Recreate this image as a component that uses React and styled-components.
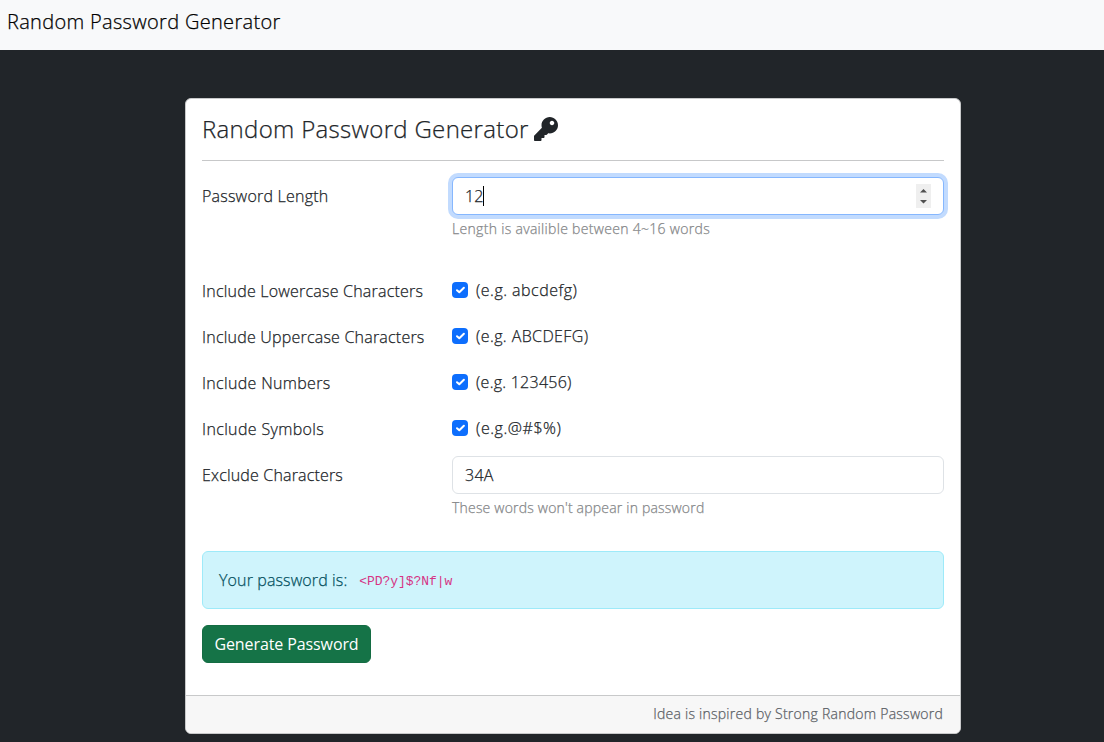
import React from "react";
import styled, { createGlobalStyle } from "styled-components";
import { FaKey } from "react-icons/fa";

const GlobalStyle = createGlobalStyle`
  *, *::before, *::after { box-sizing: border-box; }
  body {
    margin: 0;
    min-height: 742px;
    overflow: hidden;
    background: #212529;
    color: #212529;
    font-family: "Open Sans", "Noto Sans", sans-serif;
    font-size: 16px;
    font-weight: 300;
    line-height: 24px;
  }
`;

const Text = styled.span`
  white-space: nowrap;
  letter-spacing: ${({ $track = 0 }) => $track}px;
  -webkit-text-stroke: ${({ $stroke = 0.25 }) => $stroke}px currentColor;
`;

const Navbar = styled.nav`
  height: 50px;
  padding: 7px 7px 0;
  background: #f8f9fa;
  color: #000;
  font-size: 20px;
  line-height: 30px;
`;

const Card = styled.main`
  width: 776px;
  height: 636px;
  margin: 48px 0 0 185px;
  display: flex;
  flex-direction: column;
  background: #fff;
  border: 1px solid #c8c9ca;
  border-radius: 6px;
  overflow: hidden;
`;

const CardBody = styled.div`
  flex: 1;
  padding: 15px 16px 16px;
`;

const Title = styled.h1`
  display: flex;
  align-items: center;
  gap: 5px;
  height: 29px;
  margin: 0;
  font-size: 24px;
  font-weight: 300;
  line-height: 29px;
`;

const Divider = styled.hr`
  margin: 17px 0 16px;
  border: 0;
  border-top: 1px solid #c7c8c9;
`;

const Row = styled.div`
  display: grid;
  grid-template-columns: 250px 1fr;
  height: ${({ $height = 46 }) => $height}px;
`;

const Label = styled.label`
  padding-top: 7px;
`;

const Field = styled.div`
  display: flex;
  align-items: center;
  height: 38px;
  padding: 0 12px;
  background: #fff;
  border: 1px solid ${({ $focused }) => ($focused ? "#86b7fe" : "#dee2e6")};
  border-radius: 6px;
  box-shadow: ${({ $focused }) => ($focused ? "0 0 0 4px #c2dbfe" : "none")};
`;

const Caret = styled.span`
  width: 1px;
  height: 20px;
  background: #000;
`;

const Spinner = styled.span`
  display: flex;
  align-items: center;
  justify-content: center;
  width: 15px;
  height: 24px;
  margin-left: auto;
  background: #efefef;
`;

const Help = styled.div`
  padding-top: 3px;
  color: #858789;
  font-size: 14px;
  line-height: 21px;
`;

const Check = styled.label`
  display: flex;
  align-items: center;
  gap: 8px;
  height: 24px;
  margin-top: 6px;
`;

const Box = styled.span`
  display: flex;
  width: 16px;
  height: 16px;
  background: #0d6efd;
  border-radius: 4px;
`;

const Alert = styled.div`
  display: flex;
  align-items: center;
  gap: 12px;
  height: 58px;
  padding: 0 16px;
  background: #cff4fc;
  border: 1px solid #9eeaf9;
  border-radius: 6px;
  color: #055160;
`;

const Code = styled.code`
  color: #d63384;
  font-family: "Liberation Mono", monospace;
  font-size: 13px;
  font-weight: 400;
  letter-spacing: -0.07px;
  white-space: pre;
  padding-top: 3px;
`;

const Button = styled.button`
  display: flex;
  align-items: center;
  justify-content: center;
  width: 169px;
  height: 38px;
  margin-top: 16px;
  padding: 0;
  background: #157347;
  border: 1px solid #146c43;
  border-radius: 6px;
  color: #fff;
  font: inherit;
  font-weight: 400;
`;

const Footer = styled.footer`
  height: 38px;
  padding: 7px 17px;
  background: #f7f7f7;
  border-top: 1px solid #c8c9ca;
  color: #5c6166;
  font-size: 14px;
  line-height: 21px;
  text-align: right;
`;

const options = [
  { label: "Include Lowercase Characters", labelTrack: 0.21, hint: "(e.g. abcdefg)", hintTrack: 0.48 },
  { label: "Include Uppercase Characters", labelTrack: 0.21, hint: "(e.g. ABCDEFG)", hintTrack: 0.4 },
  { label: "Include Numbers", labelTrack: 0.32, hint: "(e.g. 123456)", hintTrack: 0.25 },
  { label: "Include Symbols", labelTrack: 0.35, hint: "(e.g.@#$%)", hintTrack: 0.55 },
];

export default function App() {
  return (
    <>
      <GlobalStyle />
      <Navbar><Text $track={0.32}>Random Password Generator</Text></Navbar>
      <Card>
        <CardBody>
          <Title><Text $track={0.32}>Random Password Generator</Text><FaKey size={24} /></Title>
          <Divider />
          <Row $height={95}>
            <Label><Text $track={0.22}>Password Length</Text></Label>
            <div>
              <Field $focused>
                <Text>12</Text><Caret />
                <Spinner>
                  <svg width="9" height="16" viewBox="0 0 9 16" fill="#505050">
                    <path d="M1 4.5 4.5 1 8 4.5ZM1 12 4.5 15.5 8 12Z" />
                  </svg>
                </Spinner>
              </Field>
              <Help><Text $track={0.31}>Length is availible between 4~16 words</Text></Help>
            </div>
          </Row>
          {options.map(({ label, hint, labelTrack, hintTrack }) => (
            <Row key={label}>
              <Label><Text $track={labelTrack}>{label}</Text></Label>
              <Check>
                <Box>
                  <svg width="16" height="16" viewBox="0 0 16 16" fill="none" stroke="#fff" strokeWidth="2" strokeLinecap="round" strokeLinejoin="round">
                    <path d="m5 8.2 2.3 2.1 4.6-4.6" />
                  </svg>
                </Box>
                <Text $track={hintTrack}>{hint}</Text>
              </Check>
            </Row>
          ))}
          <Row $height={95}>
            <Label><Text $track={0.17}>Exclude Characters</Text></Label>
            <div>
              <Field><Text $track={0.3}>34A</Text></Field>
              <Help><Text $track={0.2}>These words won't appear in password</Text></Help>
            </div>
          </Row>
          <Alert><Text $track={0.12}>Your password is:</Text><Code>{"<PD?y]$?Nf|w"}</Code></Alert>
          <Button><Text $track={-0.1} $stroke={0}>Generate Password</Text></Button>
        </CardBody>
        <Footer><Text $track={0.25}>Idea is inspired by Strong Random Password</Text></Footer>
      </Card>
    </>
  );
}
